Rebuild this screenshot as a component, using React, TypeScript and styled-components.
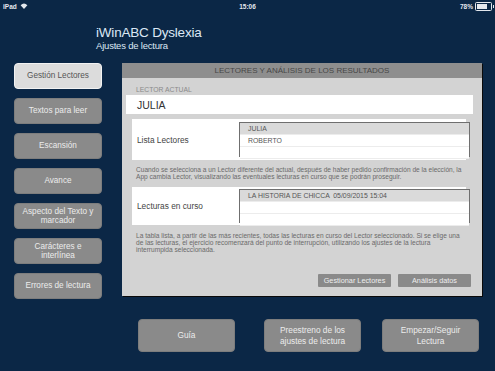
import styled, { createGlobalStyle } from "styled-components";

const Global = createGlobalStyle`
  html, body {
    margin: 0;
    padding: 0;
    background: #0b2746;
  }
  body {
    font-family: "Liberation Sans", Arial, sans-serif;
  }
`;

const Page = styled.div`
  width: 495px;
  height: 371px;
  background: #0b2746;
  display: flex;
  flex-direction: column;
  overflow: hidden;
`;

const StatusBar = styled.div`
  height: 12px;
  padding: 0 3px;
  display: grid;
  grid-template-columns: 1fr auto 1fr;
  align-items: center;
  color: #e4e8ee;
  font-size: 6.5px;
  font-weight: bold;
`;

const StatusLeft = styled.div`
  display: flex;
  align-items: center;
  gap: 3px;
`;

const StatusRight = styled.div`
  display: flex;
  align-items: center;
  justify-content: flex-end;
  gap: 2px;
`;

const Battery = styled.div`
  width: 13px;
  height: 5px;
  border: 1px solid #e4e8ee;
  border-radius: 1.5px;
  padding: 1px;
  position: relative;
  &::before {
    content: "";
    display: block;
    width: 78%;
    height: 100%;
    background: #e4e8ee;
  }
  &::after {
    content: "";
    position: absolute;
    right: -3px;
    top: 2px;
    width: 1.5px;
    height: 3px;
    background: #e4e8ee;
  }
`;

const Header = styled.div`
  padding: 13px 0 0 96px;
  height: 38px;
  color: #dce8f5;
`;

const Title = styled.div`
  font-size: 13.5px;
  line-height: 15px;
  letter-spacing: -0.2px;
`;

const Subtitle = styled.div`
  font-size: 9.5px;
  line-height: 11px;
  letter-spacing: -0.2px;
`;

const Main = styled.div`
  display: flex;
  gap: 20px;
  padding: 0 0 0 14px;
`;

const Sidebar = styled.div`
  width: 88px;
  display: flex;
  flex-direction: column;
  gap: 9px;
`;

const SideButton = styled.div<{ $active?: boolean }>`
  height: 26px;
  box-sizing: border-box;
  border-radius: 4px;
  background: ${(p) => (p.$active ? "#dcdcdc" : "#8a8a8a")};
  border: 1px solid ${(p) => (p.$active ? "#f2f2f2" : "#7d7d7d")};
  color: ${(p) => (p.$active ? "#555" : "#ececec")};
  display: flex;
  align-items: center;
  justify-content: center;
  text-align: center;
  font-size: 8.2px;
  line-height: 9.5px;
  padding: 0 3px;
`;

const Panel = styled.div`
  width: 360px;
  height: 233px;
  background: #d3d3d3;
  box-shadow: 1px 1px 0 #0a0a0a;
  display: flex;
  flex-direction: column;
`;

const PanelHeader = styled.div`
  height: 15px;
  background: #8e8e8e;
  color: #474747;
  font-size: 8px;
  display: flex;
  align-items: center;
  justify-content: center;
`;

const PanelBody = styled.div`
  padding: 0 9px 0 4px;
  display: flex;
  flex-direction: column;
`;

const SmallLabel = styled.div`
  font-size: 6.8px;
  color: #8a8a8a;
  padding: 8px 0 0 10px;
  height: 9px;
  line-height: 7px;
`;

const CurrentField = styled.div`
  height: 19px;
  background: #fff;
  color: #333;
  font-size: 10.5px;
  display: flex;
  align-items: center;
  padding-left: 11px;
`;

const RowBox = styled.div<{ $top: number; $height: number }>`
  margin: ${(p) => p.$top}px 7px 0 6px;
  height: ${(p) => p.$height}px;
  background: #fff;
  display: flex;
  align-items: center;
`;

const RowLabel = styled.div`
  width: 107px;
  padding-left: 5px;
  box-sizing: border-box;
  color: #444;
  font-size: 8.3px;
`;

const List = styled.div<{ $height: number }>`
  flex: 1;
  height: ${(p) => p.$height}px;
  box-sizing: border-box;
  border: 1px solid #6f6f6f;
  background: #fff;
  margin-right: -4px;
  display: flex;
  flex-direction: column;
`;

const ListItem = styled.div<{ $selected?: boolean }>`
  height: 11px;
  flex-shrink: 0;
  background: ${(p) => (p.$selected ? "#dadada" : "#fff")};
  border-bottom: 1px solid #ececec;
  color: #555;
  font-size: 6.9px;
  line-height: 11px;
  padding-left: 8px;
  white-space: pre;
`;

const Note = styled.div<{ $top: number }>`
  margin: ${(p) => p.$top}px 0 0 10px;
  color: #6a6a6a;
  font-size: 6.6px;
  line-height: 7px;
  padding-right: 11px;
`;

const ActionRow = styled.div`
  display: flex;
  justify-content: flex-end;
  gap: 7px;
  margin-top: 21px;
  padding-right: 2px;
`;

const ActionButton = styled.div`
  width: 73px;
  height: 13px;
  background: #8a8a8a;
  border-radius: 1px;
  color: #eeeeee;
  font-size: 7.3px;
  display: flex;
  align-items: center;
  justify-content: center;
`;

const BottomBar = styled.div`
  display: flex;
  gap: 29px;
  padding: 20px 0 0 138px;
`;

const BottomButton = styled.div`
  width: 97px;
  height: 33px;
  box-sizing: border-box;
  border-radius: 4px;
  background: #8a8a8a;
  border: 1px solid #7d7d7d;
  color: #ececec;
  font-size: 8.3px;
  line-height: 10.5px;
  padding: 0 12px;
  display: flex;
  align-items: center;
  justify-content: center;
  text-align: center;
  &:nth-child(3) {
    margin-left: -8px;
  }
`;

const Wifi = () => (
  <svg width="8" height="6" viewBox="0 0 8 6">
    <path d="M4 6 L0.6 2.2 A5 5 0 0 1 7.4 2.2 Z" fill="#e4e8ee" />
  </svg>
);

const sections = [
  "Gestión Lectores",
  "Textos para leer",
  "Escansión",
  "Avance",
  "Aspecto del Texto y marcador",
  "Carácteres e interlínea",
  "Errores de lectura",
];

export default function App() {
  return (
    <Page>
      <Global />
      <StatusBar>
        <StatusLeft>
          iPad <Wifi />
        </StatusLeft>
        <div>15:06</div>
        <StatusRight>
          78% <Battery />
        </StatusRight>
      </StatusBar>
      <Header>
        <Title>iWinABC Dyslexia</Title>
        <Subtitle>Ajustes de lectura</Subtitle>
      </Header>
      <Main>
        <Sidebar>
          {sections.map((s, i) => (
            <SideButton key={s} $active={i === 0}>
              {s}
            </SideButton>
          ))}
        </Sidebar>
        <Panel>
          <PanelHeader>LECTORES Y ANÁLISIS DE LOS RESULTADOS</PanelHeader>
          <PanelBody>
            <SmallLabel>LECTOR ACTUAL</SmallLabel>
            <CurrentField>JULIA</CurrentField>
            <RowBox $top={5} $height={41}>
              <RowLabel>Lista Lectores</RowLabel>
              <List $height={35}>
                <ListItem $selected>JULIA</ListItem>
                <ListItem>ROBERTO</ListItem>
                <ListItem />
              </List>
            </RowBox>
            <Note $top={6}>
              Cuando se selecciona a un Lector diferente del actual, después de haber pedido confirmación de la elección, la App cambia Lector, visualizando las eventuales lecturas en curso que se podrán proseguir.
            </Note>
            <RowBox $top={7} $height={38}>
              <RowLabel>Lecturas en curso</RowLabel>
              <List $height={34}>
                <ListItem $selected>{"LA HISTORIA DE CHICCA  05/09/2015 15:04"}</ListItem>
                <ListItem />
                <ListItem />
              </List>
            </RowBox>
            <Note $top={7}>
              La tabla lista, a partir de las más recientes, todas las lecturas en curso del Lector seleccionado. Si se elige una de las lecturas, el ejercicio recomenzará del punto de interrupción, utilizando los ajustes de la lectura interrumpida seleccionada.
            </Note>
            <ActionRow>
              <ActionButton>Gestionar Lectores</ActionButton>
              <ActionButton>Análisis datos</ActionButton>
            </ActionRow>
          </PanelBody>
        </Panel>
      </Main>
      <BottomBar>
        <BottomButton>Guía</BottomButton>
        <BottomButton>Preestreno de los ajustes de lectura</BottomButton>
        <BottomButton>Empezar/Seguir Lectura</BottomButton>
      </BottomBar>
    </Page>
  );
}
